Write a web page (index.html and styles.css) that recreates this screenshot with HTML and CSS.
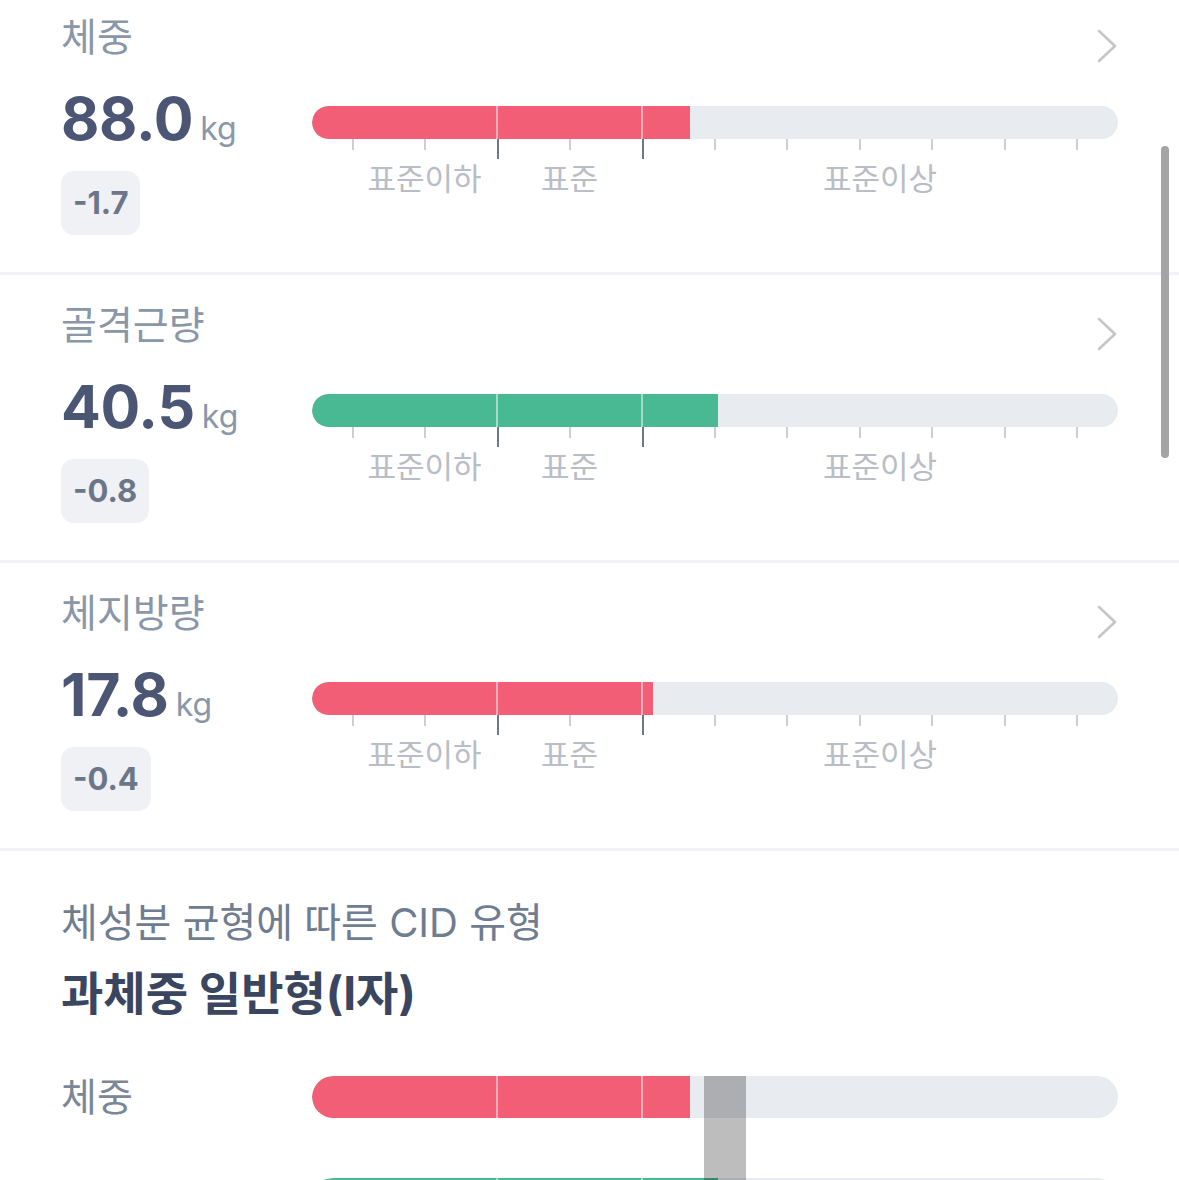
FILE: index.html
```html
<!DOCTYPE html>
<html lang="ko">
  <head>
    <meta charset="UTF-8" />
    <meta name="viewport" content="width=device-width, initial-scale=1.0" />
    <title>체성분</title>
    <link rel="stylesheet" href="styles.css">
  </head>
  <body>
    <div class="page">
      <!-- 체중 -->
      <section class="metric">
        <div class="metric-head">
          <h2 class="metric-title">체중</h2>
          <svg class="chevron" width="22" height="34" viewBox="0 0 22 34"><polyline points="3,2 19,17 3,32" /></svg>
        </div>
        <div class="metric-body">
          <div class="metric-value">
            <div class="value"><span class="num">88.0</span><span class="unit">kg</span></div>
            <span class="delta">-1.7</span>
          </div>
          <div class="gauge">
            <div class="track">
              <div class="fill red" style="width: 378px"><i class="seg seg1"></i><i class="seg seg2"></i></div>
            </div>
            <div class="ticks">
              <i></i><i></i><i class="major"></i><i></i><i class="major"></i><i></i><i></i><i></i><i></i><i></i><i></i>
            </div>
            <div class="levels"><span>표준이하</span><span>표준</span><span>표준이상</span></div>
          </div>
        </div>
      </section>
      <!-- 골격근량 -->
      <section class="metric">
        <div class="metric-head">
          <h2 class="metric-title">골격근량</h2>
          <svg class="chevron" width="22" height="34" viewBox="0 0 22 34"><polyline points="3,2 19,17 3,32" /></svg>
        </div>
        <div class="metric-body">
          <div class="metric-value">
            <div class="value"><span class="num">40.5</span><span class="unit">kg</span></div>
            <span class="delta">-0.8</span>
          </div>
          <div class="gauge">
            <div class="track">
              <div class="fill green" style="width: 406px"><i class="seg seg1"></i><i class="seg seg2"></i></div>
            </div>
            <div class="ticks">
              <i></i><i></i><i class="major"></i><i></i><i class="major"></i><i></i><i></i><i></i><i></i><i></i><i></i>
            </div>
            <div class="levels"><span>표준이하</span><span>표준</span><span>표준이상</span></div>
          </div>
        </div>
      </section>
      <!-- 체지방량 -->
      <section class="metric">
        <div class="metric-head">
          <h2 class="metric-title">체지방량</h2>
          <svg class="chevron" width="22" height="34" viewBox="0 0 22 34"><polyline points="3,2 19,17 3,32" /></svg>
        </div>
        <div class="metric-body">
          <div class="metric-value">
            <div class="value"><span class="num">17.8</span><span class="unit">kg</span></div>
            <span class="delta">-0.4</span>
          </div>
          <div class="gauge">
            <div class="track">
              <div class="fill red" style="width: 341px"><i class="seg seg1"></i><i class="seg seg2"></i></div>
            </div>
            <div class="ticks">
              <i></i><i></i><i class="major"></i><i></i><i class="major"></i><i></i><i></i><i></i><i></i><i></i><i></i>
            </div>
            <div class="levels"><span>표준이하</span><span>표준</span><span>표준이상</span></div>
          </div>
        </div>
      </section>
      <!-- CID 유형 -->
      <section class="cid">
        <p class="cid-label">체성분 균형에 따른 CID 유형</p>
        <h3 class="cid-type">과체중 일반형(I자)</h3>
        <div class="cid-chart">
          <div class="cid-row">
            <span class="cid-name">체중</span>
            <div class="cid-track">
              <div class="fill red" style="width: 378px"><i class="seg seg1"></i><i class="seg seg2"></i></div>
            </div>
          </div>
          <div class="cid-row">
            <span class="cid-name">골격근량</span>
            <div class="cid-track">
              <div class="fill green" style="width: 406px"><i class="seg seg1"></i><i class="seg seg2"></i></div>
            </div>
          </div>
          <div class="cid-band"></div>
        </div>
      </section>
    </div>
    <div class="scroll-indicator"></div>
  </body>
</html>
```

FILE: styles.css
```css
* {
  margin: 0;
  padding: 0;
  box-sizing: border-box;
}
html,
body {
  overflow: hidden;
  background: #fff;
}
body {
  font-family: "Inter", "Noto Sans CJK KR", sans-serif;
  color: #4a5673;
}
/* 페이지가 조금 스크롤된 상태 */
.page {
  margin-top: -13px;
}
.metric {
  padding: 25px 61px 37px;
  border-bottom: 3px solid #f1f1f6;
}
.metric-head {
  display: flex;
  justify-content: space-between;
  align-items: flex-start;
}
.metric-title {
  font-size: 39px;
  font-weight: 400;
  line-height: 50px;
  color: #8a97a8;
}
.chevron {
  margin-top: 17px;
  fill: none;
  stroke: #c4c6cb;
  stroke-width: 2.6;
  stroke-linecap: round;
  stroke-linejoin: round;
}
.metric-body {
  display: flex;
}
.metric-value {
  width: 251px;
  flex-shrink: 0;
  padding-top: 24px;
  display: flex;
  flex-direction: column;
  align-items: flex-start;
}
.value {
  height: 64px;
  font-size: 59px;
  line-height: 64px;
  white-space: nowrap;
}
.value .num {
  font-weight: 700;
  letter-spacing: -0.3px;
  color: #4a5673;
}
.value .unit {
  margin-left: 7px;
  font-size: 32px;
  line-height: 32px;
  color: #8a97a8;
}
.delta {
  margin-top: 20px;
  height: 64px;
  line-height: 64px;
  padding: 0 12px;
  border-radius: 13px;
  background: #f0f1f5;
  font-size: 31px;
  font-weight: 700;
  color: #6b7789;
}
.gauge {
  flex: 1;
  padding-top: 43px;
}
.track {
  height: 33px;
  border-radius: 16.5px;
  background: #e8ebf0;
  overflow: hidden;
}
.fill {
  position: relative;
  height: 100%;
  border-radius: 21px 0 0 21px;
}
.fill.red {
  background: #f25e76;
}
.fill.green {
  background: #49b993;
}
/* 표준 구간 경계선 */
.seg {
  position: absolute;
  top: 0;
  bottom: 0;
  width: 2px;
  background: rgba(255, 255, 255, 0.5);
}
.seg1 {
  left: 184px;
}
.seg2 {
  left: 329px;
}
.ticks {
  display: flex;
  justify-content: space-between;
  align-items: flex-start;
  height: 19px;
  padding: 0 40px;
}
.ticks i {
  width: 2px;
  height: 11px;
  background: #cbcfd6;
}
.ticks i.major {
  height: 20px;
  background: #6d7789;
}
.levels {
  display: flex;
  padding-left: 40px;
  margin-top: 1px;
  font-size: 31px;
  line-height: 40px;
  color: #b8bdc6;
}
.levels span {
  width: 145px;
  text-align: center;
}
.levels span:last-child {
  flex: 1;
}
.cid {
  padding: 47px 61px 0;
}
.cid-label {
  font-size: 40px;
  line-height: 50px;
  color: #6f7d90;
}
.cid-type {
  margin-top: 20px;
  font-size: 46px;
  font-weight: 700;
  line-height: 50px;
  color: #3a4560;
}
.cid-chart {
  position: relative;
  display: flex;
  flex-direction: column;
  gap: 60px;
  margin-top: 58px;
}
.cid-row {
  display: flex;
  align-items: center;
}
.cid-name {
  width: 251px;
  flex-shrink: 0;
  font-size: 39px;
  line-height: 42px;
  color: #7a8799;
}
.cid-track {
  flex: 1;
  height: 42px;
  border-radius: 21px;
  background: #e8ebf0;
  overflow: hidden;
}
/* 표준 범위 표시 */
.cid-band {
  position: absolute;
  left: 643px;
  top: 0;
  width: 42px;
  height: 240px;
  background: rgba(0, 0, 0, 0.26);
}
.scroll-indicator {
  position: fixed;
  top: 146px;
  right: 10px;
  width: 8px;
  height: 312px;
  border-radius: 4px;
  background: #a4a4a4;
}
```
